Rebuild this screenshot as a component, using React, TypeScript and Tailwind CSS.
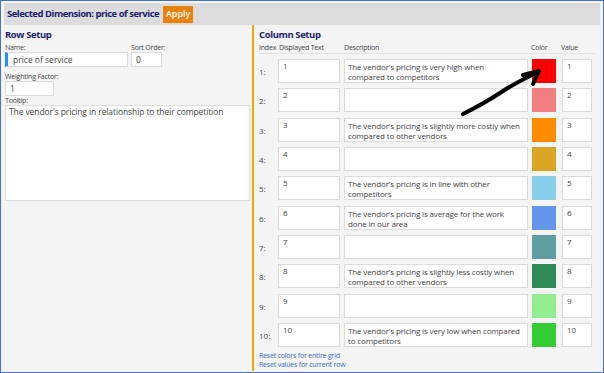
import React from "react";

const rows = [
  { text: "1", desc: "The vendor's pricing is very high when compared to competitors", color: "#ff0000" },
  { text: "2", desc: "", color: "#f08080" },
  { text: "3", desc: "The vendor's pricing is slightly more costly when compared to other vendors", color: "#ff8c00" },
  { text: "4", desc: "", color: "#daa520" },
  { text: "5", desc: "The vendor's pricing is in line with other competitors", color: "#87ceeb" },
  { text: "6", desc: "The vendor's pricing is average for the work done in our area", color: "#6495ed" },
  { text: "7", desc: "", color: "#5f9ea0" },
  { text: "8", desc: "The vendor's pricing is slightly less costly when compared to other vendors", color: "#2e8b57" },
  { text: "9", desc: "", color: "#90ee90" },
  { text: "10", desc: "The vendor's pricing is very low when compared to competitors", color: "#32cd32" },
];

const box = "bg-white border border-[#dcdcdc] text-[#444]";

export default function App() {
  return (
    <div className="relative w-[604px] h-[373px] border border-[#4472c4] bg-[#f4f4f4] font-['Open_Sans',sans-serif] overflow-hidden">
      {/* Header */}
      <div className="mx-[3px] mt-[2px] h-[22px] bg-[#dcdcdc] flex items-center pl-[3px] gap-[4px]">
        <span className="text-[9.5px] font-bold text-[#1b1b6f] tracking-[-0.5px]">Selected Dimension: price of service</span>
        <span className="bg-[#e8820c] text-white text-[9px] font-semibold w-[30px] justify-center h-[17px] flex items-center">Apply</span>
      </div>

      <div className="flex h-[346px]">
        {/* Row setup */}
        <div className="w-[253px] pl-[4px] pr-[2px] pt-[3px] border-r-2 border-[#f5a800]">
          <div className="text-[9.5px] font-bold text-[#1b1b6f] leading-[14px] tracking-[-0.4px]">Row Setup</div>
          <div className="flex gap-[3px] mt-[1px]">
            <div>
              <div className="text-[7px] text-[#444] leading-[9px] tracking-[-0.2px]">Name:</div>
              <div className={`${box} w-[123px] h-[15px] border-l-[3px] border-l-[#1e90ff] text-[8.5px] leading-[13px] pl-[5px]`}>price of service</div>
            </div>
            <div>
              <div className="text-[7px] text-[#444] leading-[9px] tracking-[-0.2px]">Sort Order:</div>
              <div className={`${box} w-[31px] h-[15px] text-[8.5px] leading-[13px] pl-[4px]`}>0</div>
            </div>
          </div>
          <div className="text-[7px] text-[#444] leading-[9px] mt-[5px] tracking-[-0.2px]">Weighting Factor:</div>
          <div className={`${box} w-[49px] h-[15px] text-[8.5px] leading-[13px] pl-[4px]`}>1</div>
          <div className="text-[7px] text-[#444] leading-[9px] tracking-[-0.2px]">Tooltip:</div>
          <div className={`${box} w-[245px] h-[96px] text-[8.5px] leading-[11px] pl-[3px] tracking-[-0.1px]`}>
            The vendor's pricing in relationship to their competition
          </div>
        </div>

        {/* Column setup */}
        <div className="flex-1 pl-[5px] pt-[3px]">
          <div className="text-[9.5px] font-bold text-[#1b1b6f] leading-[14px] tracking-[-0.4px]">Column Setup</div>
          <div className="flex items-end text-[7px] text-[#444] leading-[9px] h-[12px] pb-[1px] border-b border-[#e2e2e2] w-[336px] tracking-[-0.2px]">
            <span className="w-[20px]">Index</span>
            <span className="w-[65px]">Displayed Text</span>
            <span className="w-[187px]">Description</span>
            <span className="w-[30px]">Color</span>
            <span>Value</span>
          </div>
          <div className="flex flex-col gap-[5.33px] mt-[5px]">
            {rows.map((r, i) => (
              <div key={i} className="flex items-center h-[24px]">
                <span className="w-[19px] text-[8px] text-[#444] pt-[2px]">{i + 1}:</span>
                <div className={`${box} w-[62px] h-[24px] text-[8px] leading-[10px] pl-[4px] pt-[1px]`}>{r.text}</div>
                <div className={`${box} w-[184px] h-[24px] ml-[4px] text-[8px] leading-[10px] pl-[3px] pt-[2px] pr-[5px] tracking-[-0.15px]`}>{r.desc}</div>
                <div className="w-[24px] h-[24px] ml-[4px]" style={{ backgroundColor: r.color }} />
                <div className={`${box} w-[30px] h-[24px] ml-[6px] text-[8px] leading-[10px] pl-[4px] pt-[1px]`}>{r.text}</div>
              </div>
            ))}
          </div>
          <div className="mt-[4px] text-[7px] leading-[9px] text-[#3a6fc4] tracking-[-0.2px]">
            <div>Reset colors for entire grid</div>
            <div>Reset values for current row</div>
          </div>
        </div>
      </div>

      {/* Annotation arrow */}
      <svg className="absolute left-0 top-0 pointer-events-none" width="604" height="373">
        <path d="M462 113 C 478 105, 490 98, 502 90 C 514 82, 525 77, 537 71" fill="none" stroke="#000" strokeWidth="4" strokeLinecap="round" />
        <path d="M522 74 L 538 70 L 532 83" fill="none" stroke="#000" strokeWidth="4" strokeLinecap="round" strokeLinejoin="round" />
      </svg>
    </div>
  );
}
